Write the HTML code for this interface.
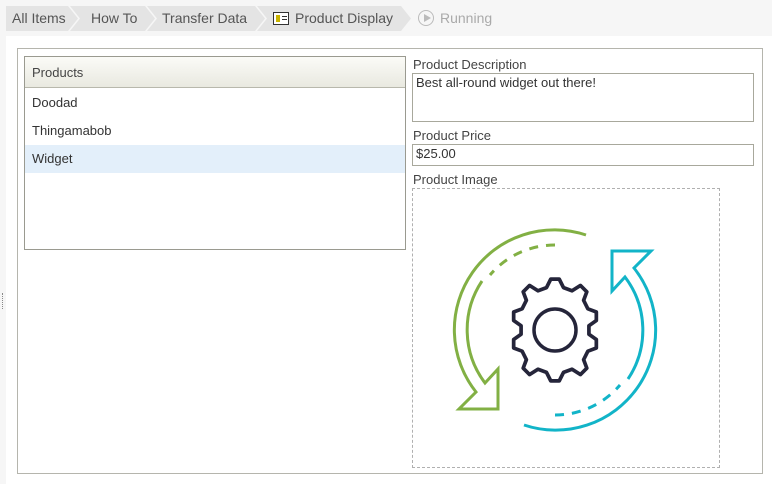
<!DOCTYPE html>
<html><head><meta charset="utf-8"><style>
*{margin:0;padding:0;box-sizing:border-box}
body{width:772px;height:484px;background:#f6f6f6;font-family:"Liberation Sans",sans-serif;position:relative;overflow:hidden;color:#333}
.bc{position:absolute;top:6px;height:25px;background:#e4e4e4;color:#555;font-size:14px;line-height:25px;clip-path:polygon(0 0,calc(100% - 10px) 0,100% 50%,calc(100% - 10px) 100%,0 100%,10px 50%)}
.main{position:absolute;left:6px;top:36px;width:766px;height:448px;background:#fff}
.box{position:absolute;left:17px;top:48px;width:746px;height:426px;border:1px solid #b5b5ad}
.list{position:absolute;left:24px;top:56px;width:382px;height:194px;border:1px solid #9a9a90;background:#fff}
.hd{height:31px;background:linear-gradient(#fbfbf7,#e9e9e0);border-bottom:1px solid #b8b8ac;font-size:13px;line-height:31px;padding-left:7px;color:#444}
.row{height:28px;line-height:28px;font-size:13px;padding-left:7px;color:#333}
.lbl{position:absolute;left:413px;font-size:13px;color:#444}
.inp{position:absolute;left:412px;width:342px;border:1px solid #a8a89c;font-size:13px;padding:1px 3px;color:#333;background:#fff}
</style></head><body>
<div class="bc" style="left:6px;width:72px;clip-path:polygon(0 0,62px 0,72px 50%,62px 100%,0 100%);padding-left:6px">All Items</div>
<div class="bc" style="left:70px;width:85px;padding-left:21px">How To</div>
<div class="bc" style="left:147px;width:118px;padding-left:15px">Transfer Data</div>
<div class="bc" style="left:257px;width:154px;padding-left:16px"><span style="display:inline-block;width:16px;height:13px;border:1px solid #333;vertical-align:-2px;margin-right:6px;position:relative;background:#fff"><span style="position:absolute;left:2px;top:2px;width:4px;height:7px;background:#c9b400"></span><span style="position:absolute;left:8px;top:3px;width:5px;height:1px;background:#333"></span><span style="position:absolute;left:8px;top:6px;width:5px;height:1px;background:#333"></span></span>Product Display</div>
<div style="position:absolute;left:418px;top:6px;height:25px;line-height:25px;font-size:14px;color:#aaa"><span style="display:inline-block;width:16px;height:16px;border:1px solid #bbb;border-radius:50%;vertical-align:-3px;margin-right:6px;position:relative"><span style="position:absolute;left:5px;top:3px;border-left:7px solid #bbb;border-top:4px solid transparent;border-bottom:4px solid transparent"></span></span>Running</div>
<div style="position:absolute;left:2px;top:293px;width:1px;height:16px;border-left:1px dotted #888"></div>
<div class="main"></div>
<div class="box"></div>
<div class="list"><div class="hd">Products</div>
<div class="row" style="margin-top:1px">Doodad</div><div class="row">Thingamabob</div><div class="row" style="background:#e3effa">Widget</div></div>
<div class="lbl" style="top:57px">Product Description</div>
<div class="inp" style="top:73px;height:49px">Best all-round widget out there!</div>
<div class="lbl" style="top:128px">Product Price</div>
<div class="inp" style="top:144px;height:22px">$25.00</div>
<div class="lbl" style="top:172px">Product Image</div>
<div style="position:absolute;left:412px;top:188px;width:308px;height:280px;border:1px dashed #b0b0b0"></div>
<svg style="position:absolute;left:0;top:0" width="772" height="484" fill="none" stroke-width="3">
<g id="g" stroke="#82b044">
<path d="M586 235 A100 100 0 0 0 476 392 L459 409 L498 409 L498 369 L485 383 A88 88 0 0 1 482 281"/>
<path d="M555 245 A85 85 0 0 0 490 275" stroke-dasharray="9 8"/>
</g>
<g stroke="#12b4c8" transform="rotate(180 555 330)">
<path d="M586 235 A100 100 0 0 0 476 392 L459 409 L498 409 L498 369 L485 383 A88 88 0 0 1 482 281"/>
<path d="M555 245 A85 85 0 0 0 490 275" stroke-dasharray="9 8"/>
</g>
<g stroke="#25253a" stroke-width="3.5" stroke-linejoin="round">
<circle cx="555" cy="330" r="21"/>
<path d="M547 290 L551 282 L559 282 L563 290 L571 293 L579 288 L585 294 L582 302 L586 310 L594 313 L594 321 L587 326 L587 334 L594 339 L594 347 L586 350 L582 358 L585 366 L579 372 L571 367 L563 370 L559 378 L551 378 L547 370 L539 367 L531 372 L525 366 L528 358 L524 350 L516 347 L516 339 L523 334 L523 326 L516 321 L516 313 L524 310 L528 302 L525 294 L531 288 L539 293 Z" transform="translate(555 330) scale(1.06) translate(-555 -330)"/>
</g>
</svg>
</body></html>
